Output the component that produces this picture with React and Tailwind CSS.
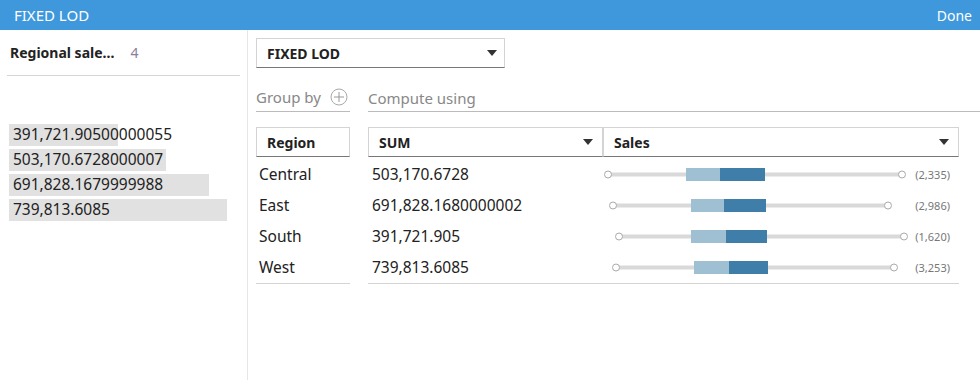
import React from "react";

const font = { fontFamily: '"Noto Sans", "Open Sans", sans-serif' };

const leftBars = [
  { text: "391,721.90500000055", w: 109 },
  { text: "503,170.6728000007", w: 157 },
  { text: "691,828.1679999988", w: 200 },
  { text: "739,813.6085", w: 218 },
];

const rows = [
  { region: "Central", sum: "503,170.6728", c1: 5, c2: 299, l: 83, m: 117, r: 162, n: "(2,335)" },
  { region: "East", sum: "691,828.1680000002", c1: 10, c2: 285, l: 88, m: 121, r: 163, n: "(2,986)" },
  { region: "South", sum: "391,721.905", c1: 16, c2: 301, l: 88, m: 123, r: 164, n: "(1,620)" },
  { region: "West", sum: "739,813.6085", c1: 13, c2: 291, l: 91, m: 126, r: 165, n: "(3,253)" },
];

function Caret() {
  return (
    <svg width="10" height="6" viewBox="0 0 10 6">
      <path d="M0 0 H10 L5 6 Z" fill="#333" />
    </svg>
  );
}

function BoxPlot({ c1, c2, l, m, r, n }) {
  return (
    <svg width="356" height="31" viewBox="0 0 356 31" className="block">
      <line x1={c1} y1="15.5" x2={c2} y2="15.5" stroke="#d9d9d9" strokeWidth="4" />
      <rect x={l} y="9" width={m - l} height="13" fill="#9fbfd3" />
      <rect x={m} y="9" width={r - m} height="13" fill="#3f7ea8" />
      <circle cx={c1} cy="15.5" r="3.5" fill="#fff" stroke="#aaa" strokeWidth="1" />
      <circle cx={c2} cy="15.5" r="3.5" fill="#fff" stroke="#aaa" strokeWidth="1" />
      <text x="347" y="19.5" textAnchor="end" fontSize="11" fill="#777" style={font}>
        {n}
      </text>
    </svg>
  );
}

export default function App() {
  return (
    <div className="w-[980px] h-[380px] bg-white flex flex-col overflow-hidden text-[#222]" style={font}>
      <div className="h-[30px] bg-[#3e98db] flex items-center justify-between pl-[14px] pr-2 text-white">
        <span className="text-[15px]">FIXED LOD</span>
        <span className="text-[14px]">Done</span>
      </div>
      <div className="flex flex-1">
        <div className="w-[248px] border-r border-[#e6e6e6] flex flex-col">
          <div className="mx-[7px] h-[46px] border-b border-[#d6d6d6] flex items-center pl-[3px] gap-[16px]">
            <span className="font-bold text-[14px]">Regional sale...</span>
            <span className="text-[14px] text-[#8a7f9c]">4</span>
          </div>
          <div className="mt-[48px] pl-[9px] flex flex-col gap-[3px]">
            {leftBars.map((b) => (
              <div key={b.text} className="relative h-[22px] flex items-center">
                <div className="absolute left-0 top-0 h-[22px] bg-[#e1e1e1]" style={{ width: b.w }} />
                <span className="relative pl-[4px] text-[15.5px] whitespace-nowrap">{b.text}</span>
              </div>
            ))}
          </div>
        </div>
        <div className="flex-1 pl-[8px] flex flex-col">
          <div className="mt-[8px] w-[249px] h-[30px] border border-[#d4d4d4] border-b-[#777] flex items-center justify-between pl-[10px] pr-[7px]">
            <span className="font-bold text-[14px]">FIXED LOD</span>
            <Caret />
          </div>
          <div className="mt-[18px] flex gap-[18px] h-[26px]">
            <div className="w-[94px] border-b border-[#bbb] flex items-start gap-[9px]">
              <span className="text-[15px] text-[#888] leading-[22px]">Group by</span>
              <svg width="18" height="18" viewBox="0 0 18 18" className="mt-[2px]">
                <circle cx="9" cy="9" r="8" fill="none" stroke="#aaa" strokeWidth="1" />
                <path d="M9 4 V14 M4 9 H14" stroke="#999" strokeWidth="1" />
              </svg>
            </div>
            <div className="flex-1 border-b border-[#bbb]">
              <span className="text-[15px] text-[#888] leading-[22px]">Compute using</span>
            </div>
          </div>
          <div className="mt-[15px] flex gap-[18px]">
            <div className="w-[94px]">
              <div className="h-[30px] border border-[#d4d4d4] border-b-[#777] flex items-center pl-[10px] font-bold text-[14px]">
                Region
              </div>
              <div className="pt-[2px] border-b border-[#d4d4d4]">
                {rows.map((r) => (
                  <div key={r.region} className="h-[31px] flex items-center pl-[3px] text-[15.5px]">
                    {r.region}
                  </div>
                ))}
              </div>
            </div>
            <div className="w-[591px]">
              <div className="flex h-[30px]">
                <div className="w-[235px] border border-[#d4d4d4] border-b-[#777] flex items-center justify-between pl-[10px] pr-[9px]">
                  <span className="font-bold text-[14px]">SUM</span>
                  <Caret />
                </div>
                <div className="w-[356px] border border-[#d4d4d4] border-b-[#777] flex items-center justify-between pl-[10px] pr-[9px]">
                  <span className="font-bold text-[14px]">Sales</span>
                  <Caret />
                </div>
              </div>
              <div className="pt-[2px] border-b border-[#d4d4d4]">
                {rows.map((r) => (
                  <div key={r.region} className="h-[31px] flex items-center">
                    <div className="w-[235px] pl-[4px] text-[15.5px]">{r.sum}</div>
                    <BoxPlot {...r} />
                  </div>
                ))}
              </div>
            </div>
          </div>
        </div>
      </div>
    </div>
  );
}
